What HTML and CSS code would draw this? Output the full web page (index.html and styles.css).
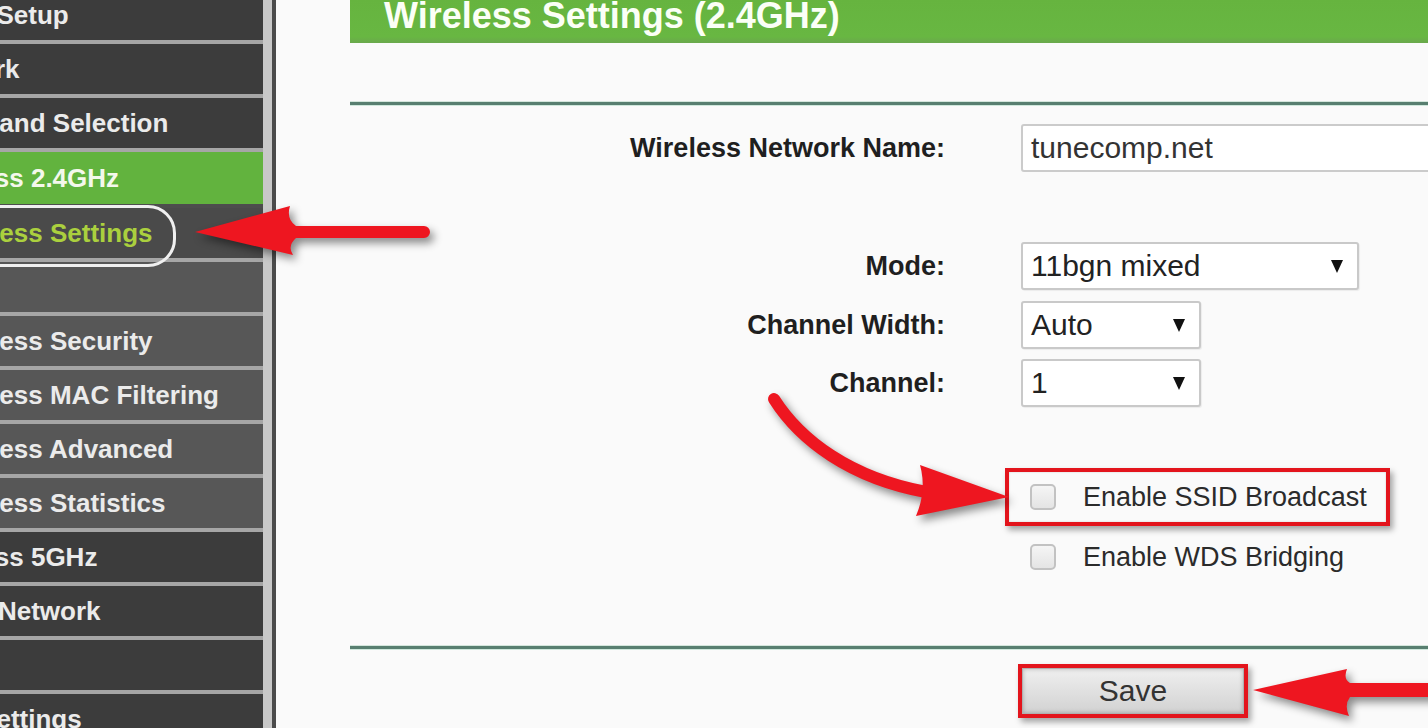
FILE: index.html
```html
<!DOCTYPE html>
<html lang="en">
<head>
<meta charset="utf-8">
<title>Wireless Settings (2.4GHz)</title>
<link rel="stylesheet" href="styles.css">
</head>
<body>
<div class="page">
  <nav class="sidebar">
    <ul class="menu">
      <li class="item">Quick Setup</li>
      <li class="item">Network</li>
      <li class="item">Dual Band Selection</li>
      <li class="item open">Wireless 2.4GHz</li>
      <li class="item sub current">Wireless Settings</li>
      <li class="item sub">WPS</li>
      <li class="item sub">Wireless Security</li>
      <li class="item sub">Wireless MAC Filtering</li>
      <li class="item sub">Wireless Advanced</li>
      <li class="item sub">Wireless Statistics</li>
      <li class="item">Wireless 5GHz</li>
      <li class="item">Guest Network</li>
      <li class="item">DHCP</li>
      <li class="item">USB Settings</li>
    </ul>
  </nav>

  <main class="content">
    <h1 class="title">Wireless Settings (2.4GHz)</h1>
    <div class="rule"></div>

    <div class="row row-name">
      <div class="label">Wireless Network Name:</div>
      <div class="input">tunecomp.net</div>
    </div>
    <div class="row row-mode">
      <div class="label">Mode:</div>
      <div class="select wide"><span>11bgn mixed</span><span class="caret"></span></div>
    </div>
    <div class="row row-cw">
      <div class="label">Channel Width:</div>
      <div class="select narrow"><span>Auto</span><span class="caret"></span></div>
    </div>
    <div class="row row-ch">
      <div class="label">Channel:</div>
      <div class="select narrow"><span>1</span><span class="caret"></span></div>
    </div>
    <div class="row row-ssid">
      <div class="label"></div>
      <div class="check hl"><span class="box"></span><span>Enable SSID Broadcast</span></div>
    </div>
    <div class="row row-wds">
      <div class="label"></div>
      <div class="check"><span class="box"></span><span>Enable WDS Bridging</span></div>
    </div>

    <div class="rule rule-bottom"></div>
    <div class="actions">
      <div class="savebox"><button class="save" type="button">Save</button></div>
    </div>
  </main>

  <svg class="annot" width="1428" height="728" viewBox="0 0 1428 728" aria-hidden="true">
    <g class="arrows">
      <path d="M195,232 L290,206 Q286,219 296,226 L424,226 A6,6 0 0 1 424,238 L296,238 Q287,246 293,255 Z"/>
      <path class="stroke" d="M774,399 C 800,440 850,478 926,492"/>
      <path d="M1009,497 L920,465 Q927,490 916,516 Z"/>
      <path d="M1253,690 L1347,669 Q1343,679 1350,683 L1440,683 L1440,697 L1350,697 Q1344,705 1349,716 Z"/>
    </g>
  </svg>
</div>
</body>
</html>
```

FILE: styles.css
```css
* { box-sizing: border-box; }

html, body {
  margin: 0;
  padding: 0;
}

body {
  width: 1428px;
  height: 728px;
  overflow: hidden;
  background: #fafafa;
  font-family: "Liberation Sans", Arial, sans-serif;
}

.page {
  position: relative;
  display: flex;
  height: 728px;
}

/* ---------- sidebar ---------- */
.sidebar {
  flex: none;
  width: 276px;
  height: 100%;
  overflow: hidden;
  background: #c8c8c8;
  border-right: 4px solid #4b4b4b;
}

.menu {
  list-style: none;
  margin: -10px 0 0;
  padding: 0;
  width: 263px;
}

.item {
  height: 54px;
  line-height: 50px;
  border-bottom: 4px solid #a6a6a6;
  background: #3c3c3c;
  color: #ebebeb;
  font-size: 26px;
  font-weight: bold;
  white-space: nowrap;
  text-indent: -83px;
}

.item.open {
  height: 56px;
  line-height: 52px;
  background: #62b33e;
  border-bottom-color: #4d4d4d;
  color: #f4f8ec;
}

.item.sub {
  text-indent: -64px;
  background: #575757;
}

.item.current {
  position: relative;
  background: #4a4a4a;
  color: #abd03e;
}

.item.current::after {
  content: "";
  position: absolute;
  left: -40px;
  top: -3px;
  width: 210px;
  height: 56px;
  border: 3px solid #f0f0f0;
  border-radius: 28px;
}

/* ---------- content ---------- */
.content {
  flex: 1;
  min-width: 0;
  padding-left: 74px;
}

.title {
  margin: 0;
  height: 43px;
  padding-left: 34px;
  background: linear-gradient(#66b43f, #68b742 85%, #6aa84c);
  color: #fbfff6;
  font-size: 36px;
  font-weight: bold;
  line-height: 32px;
  white-space: nowrap;
}

.rule {
  height: 3px;
  margin-top: 59px;
  background: #587f70;
  box-shadow: 0 1px 0 #cfe8dc, 0 -1px 0 #d4e6dc;
}

.rule-bottom {
  margin-top: 60px;
}

.row {
  display: grid;
  grid-template-columns: 595px 1fr;
  column-gap: 76px;
  align-items: center;
}

.row-name { margin-top: 19px; }
.row-mode { margin-top: 70px; }
.row-cw   { margin-top: 11px; }
.row-ch   { margin-top: 10px; }
.row-ssid { margin-top: 61px; }
.row-wds  { margin-top: 2px; }

.label {
  text-align: right;
  font-size: 27px;
  font-weight: bold;
  color: #1f1f1f;
  white-space: nowrap;
}

.input {
  width: 470px;
  height: 48px;
  padding-left: 8px;
  border: 2px solid #cbcbcb;
  border-radius: 3px;
  background: #fff;
  color: #333;
  font-size: 30px;
  line-height: 44px;
  white-space: nowrap;
}

.select {
  display: flex;
  align-items: center;
  justify-content: space-between;
  height: 48px;
  padding: 0 14px 0 8px;
  border: 2px solid #c9c9c9;
  border-radius: 3px;
  background: #fff;
  color: #222;
  font-size: 30px;
  box-shadow: 1px 1px 1px rgba(0,0,0,0.06);
}

.select.wide { width: 338px; }
.select.narrow { width: 180px; }

.caret {
  width: 0;
  height: 0;
  border-left: 6px solid transparent;
  border-right: 6px solid transparent;
  border-top: 13px solid #111;
}

.check {
  justify-self: start;
  display: flex;
  align-items: center;
  gap: 27px;
  height: 58px;
  margin-left: -16px;
  padding: 0 19px 0 21px;
  border: 4px solid transparent;
  color: #2b2b2b;
  font-size: 27px;
  white-space: nowrap;
}

.check.hl {
  border-color: #e3141c;
  box-shadow: 3px 4px 6px rgba(0,0,0,0.35), inset 0 0 2px rgba(0,0,0,0.2);
}

.box {
  flex: none;
  width: 26px;
  height: 26px;
  border: 2px solid #c2c2c2;
  border-radius: 5px;
  background: linear-gradient(#f5f5f5, #e4e4e4);
}

.actions {
  margin-top: 15px;
  padding-left: 668px;
}

.savebox {
  display: inline-block;
  border: 4px solid #e3141c;
  box-shadow: 3px 4px 6px rgba(0,0,0,0.35);
}

.save {
  display: block;
  width: 222px;
  height: 46px;
  margin: 0;
  padding: 0;
  border: 1px solid #b0b0b0;
  background: linear-gradient(#efefef, #d2d2d2);
  box-shadow: inset 0 0 4px rgba(0,0,0,0.25);
  color: #333;
  font-family: "Liberation Sans", Arial, sans-serif;
  font-size: 30px;
}

/* ---------- annotation overlay ---------- */
.annot {
  position: absolute;
  left: 0;
  top: 0;
  pointer-events: none;
  overflow: visible;
}

.arrows {
  fill: #ee1620;
  filter: drop-shadow(4px 5px 4px rgba(0,0,0,0.45));
}

.arrows .stroke {
  fill: none;
  stroke: #ee1620;
  stroke-width: 12;
  stroke-linecap: round;
}
```
